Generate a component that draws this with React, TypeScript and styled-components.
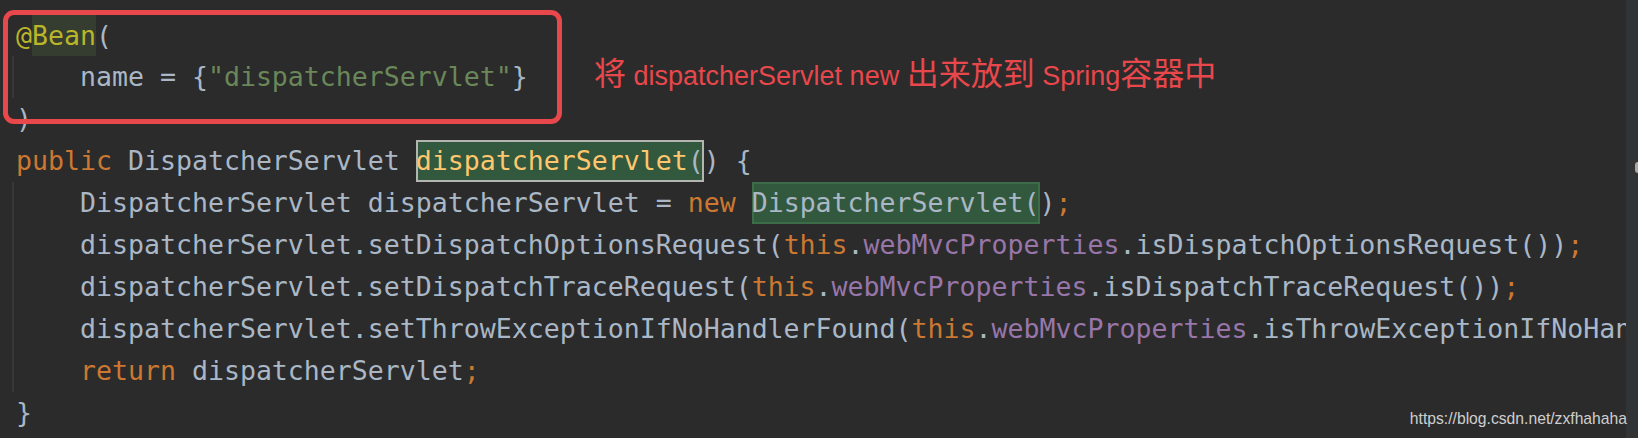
import React from "react";
import styled, { createGlobalStyle, css } from "styled-components";

const Global = createGlobalStyle`
  html, body {
    margin: 0;
    padding: 0;
    background: #2b2b2b;
  }
  body {
    width: 1638px;
    height: 438px;
    overflow: hidden;
  }
`;

const Page = styled.div`
  position: relative;
  display: flex;
  width: 1638px;
  height: 438px;
  background: #2b2b2b;
  overflow: hidden;
`;

const Editor = styled.div`
  flex: 1;
  min-width: 0;
  overflow: hidden;
  padding-top: 14.5px;
  font-family: "DejaVu Sans Mono", "Liberation Mono", monospace;
  font-size: 26.57px;
  line-height: 41.9px;
  color: #a9b7c6;
  white-space: pre;
`;

const Line = styled.div<{ $guide?: boolean }>`
  height: 41.9px;
  padding-left: 16px;
  ${(p) =>
    p.$guide &&
    css`
      background: linear-gradient(
        90deg,
        transparent 12px,
        #383838 12px,
        #383838 14px,
        transparent 14px
      );
    `}
`;

type Kind = "kw" | "annot" | "str" | "method" | "field" | "plain";

const palette: Record<Kind, string> = {
  kw: "#cc7832",
  annot: "#bbb529",
  str: "#6a8759",
  method: "#ffc66d",
  field: "#9876aa",
  plain: "#a9b7c6",
};

const Tok = styled.span<{ $k: Kind }>`
  color: ${(p) => palette[p.$k]};
`;

type HlKind = "annot" | "caret" | "usage";

const hlStyles: Record<HlKind, ReturnType<typeof css>> = {
  annot: css`
    background: #353c30;
  `,
  caret: css`
    background: #32593d;
    box-shadow: inset 0 0 0 2px #b3b6b0;
  `,
  usage: css`
    background: #32593d;
    box-shadow: inset 0 0 0 2px #3d6c48;
  `,
};

const Hl = styled.span<{ $v: HlKind }>`
  display: inline-block;
  height: 41.9px;
  vertical-align: top;
  ${(p) => hlStyles[p.$v]}
`;

const Scrollbar = styled.div`
  width: 12px;
  flex: none;
  background: #313335;
  display: flex;
  justify-content: flex-end;
  align-items: flex-start;
  padding-top: 162px;
  box-sizing: border-box;
`;

const Thumb = styled.div`
  width: 3px;
  height: 11px;
  background: #a8a8a8;
  border-radius: 3px 0 0 3px;
`;

const Frame = styled.div`
  position: absolute;
  left: 3px;
  top: 9.5px;
  width: 559px;
  height: 114px;
  box-sizing: border-box;
  border: 5.5px solid #e8474b;
  border-radius: 11px;
  pointer-events: none;
`;

const Note = styled.div`
  position: absolute;
  left: 594px;
  top: 53px;
  color: #e8474b;
  font-family: "Noto Sans CJK SC", sans-serif;
  font-size: 32px;
  line-height: 36px;
  white-space: pre;
`;

const NoteLatin = styled.span`
  font-family: "Liberation Sans", "Noto Sans CJK SC", sans-serif;
  font-size: 27px;
`;

const Watermark = styled.div`
  position: absolute;
  right: 11px;
  top: 411px;
  color: #cfcfcf;
  font-family: "Liberation Sans", Arial, sans-serif;
  font-size: 15.7px;
  line-height: 16px;
  white-space: pre;
`;

export default function App() {
  return (
    <>
      <Global />
      <Page>
        <Editor>
          <Line>
            <Tok $k="annot">@</Tok>
            <Hl $v="annot">
              <Tok $k="annot">Bean</Tok>
            </Hl>
            (
          </Line>
          <Line $guide>
            {"    name = {"}
            <Tok $k="str">"dispatcherServlet"</Tok>
            {"}"}
          </Line>
          <Line>)</Line>
          <Line>
            <Tok $k="kw">public</Tok>
            {" DispatcherServlet "}
            <Hl $v="caret">
              <Tok $k="method">dispatcherServlet</Tok>(
            </Hl>
            {") {"}
          </Line>
          <Line $guide>
            {"    DispatcherServlet dispatcherServlet = "}
            <Tok $k="kw">new</Tok>{" "}
            <Hl $v="usage">DispatcherServlet(</Hl>)
            <Tok $k="kw">;</Tok>
          </Line>
          <Line $guide>
            {"    dispatcherServlet.setDispatchOptionsRequest("}
            <Tok $k="kw">this</Tok>.
            <Tok $k="field">webMvcProperties</Tok>
            {".isDispatchOptionsRequest())"}
            <Tok $k="kw">;</Tok>
          </Line>
          <Line $guide>
            {"    dispatcherServlet.setDispatchTraceRequest("}
            <Tok $k="kw">this</Tok>.
            <Tok $k="field">webMvcProperties</Tok>
            {".isDispatchTraceRequest())"}
            <Tok $k="kw">;</Tok>
          </Line>
          <Line $guide>
            {"    dispatcherServlet.setThrowExceptionIfNoHandlerFound("}
            <Tok $k="kw">this</Tok>.
            <Tok $k="field">webMvcProperties</Tok>
            {".isThrowExceptionIfNoHandlerFound())"}
            <Tok $k="kw">;</Tok>
          </Line>
          <Line $guide>
            {"    "}
            <Tok $k="kw">return</Tok>
            {" dispatcherServlet"}
            <Tok $k="kw">;</Tok>
          </Line>
          <Line>{"}"}</Line>
        </Editor>
        <Scrollbar>
          <Thumb />
        </Scrollbar>
        <Frame />
        <Note>
          将<NoteLatin> dispatcherServlet new </NoteLatin>出来放到<NoteLatin> Spring</NoteLatin>容器中
        </Note>
        <Watermark>https://blog.csdn.net/zxfhahaha</Watermark>
      </Page>
    </>
  );
}
